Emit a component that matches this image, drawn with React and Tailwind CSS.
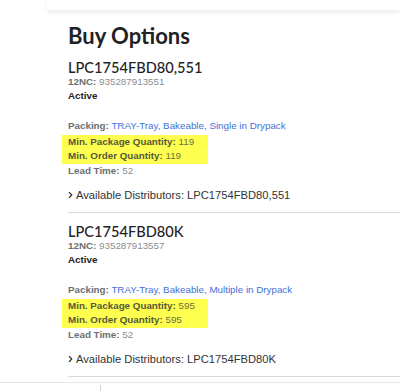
import React from "react";

const items = [
  {
    name: "LPC1754FBD80,551",
    nc: "935287913551",
    packing: "TRAY-Tray, Bakeable, Single in Drypack",
    qty: "119",
  },
  {
    name: "LPC1754FBD80K",
    nc: "935287913557",
    packing: "TRAY-Tray, Bakeable, Multiple in Drypack",
    qty: "595",
  },
];

function Chevron() {
  return (
    <svg width="5" height="8" viewBox="0 0 5 8" className="mr-[3px] shrink-0">
      <path d="M1 1.2 L3.8 4 L1 6.8" fill="none" stroke="#222" strokeWidth="1.15" />
    </svg>
  );
}

function Item({ item, first }) {
  return (
    <div className={first ? "mt-[10px]" : "mt-[12px]"}>
      <div
        className="text-[14.6px] leading-[14px] h-[14px] font-medium text-[#1f2326]"
        style={{ fontFamily: "Lato, 'Open Sans', sans-serif" }}
      >
        {item.name}
      </div>
      <div className="font-['Liberation_Sans',Arial,sans-serif] text-[9.8px] leading-[14px]">
        <div>
          <span className="font-bold text-[#6b6f73]">12NC:</span>{" "}
          <span className="text-[#8a8d90]">{item.nc}</span>
        </div>
        <div className="font-bold text-[#222]">Active</div>
        <div className="mt-[16px]">
          <span className="font-bold text-[#6b6f73]">Packing:</span>{" "}
          <span className="text-[#3f72d6]">{item.packing}</span>
        </div>
        <div className="mt-[2px] -ml-[6px] pl-[6px] w-[146px] pb-[1px] bg-[#ffff4f]">
          <div>
            <span className="font-bold text-[#55583a]">Min. Package Quantity:</span>{" "}
            <span className="text-[#6d6f45]">{item.qty}</span>
          </div>
          <div>
            <span className="font-bold text-[#55583a]">Min. Order Quantity:</span>{" "}
            <span className="text-[#6d6f45]">{item.qty}</span>
          </div>
        </div>
        <div>
          <span className="font-bold text-[#6b6f73]">Lead Time:</span>{" "}
          <span className="text-[#8a8d90]">52</span>
        </div>
      </div>
      <div className="mt-[9px] flex items-center h-[16px] font-['Liberation_Sans',Arial,sans-serif] text-[11.2px] leading-[16px] text-[#333]">
        <Chevron />
        <span>Available Distributors: {item.name}</span>
      </div>
      <div className="mt-[9px] border-b border-[#dcdcdc]" />
    </div>
  );
}

export default function App() {
  return (
    <div className="relative w-[400px] h-[391px] overflow-hidden bg-white">
      <div className="ml-[47px] h-[10px] bg-white shadow-[0_2px_5px_rgba(0,0,0,0.09)]" />
      <div className="pl-[68px]">
        <h1
          className="mt-[11px] text-[22px] leading-[30px] font-bold text-[#1f2326]"
          style={{ fontFamily: "Lato, 'Open Sans', sans-serif" }}
        >
          Buy Options
        </h1>
        {items.map((it, i) => (
          <Item key={it.name} item={it} first={i === 0} />
        ))}
      </div>
      <div className="mt-[5px] border-t border-[#e6e6e6] flex">
        <div className="ml-[100px] mt-[2px] w-px h-[8px] bg-[#cfcfcf]" />
      </div>
    </div>
  );
}
